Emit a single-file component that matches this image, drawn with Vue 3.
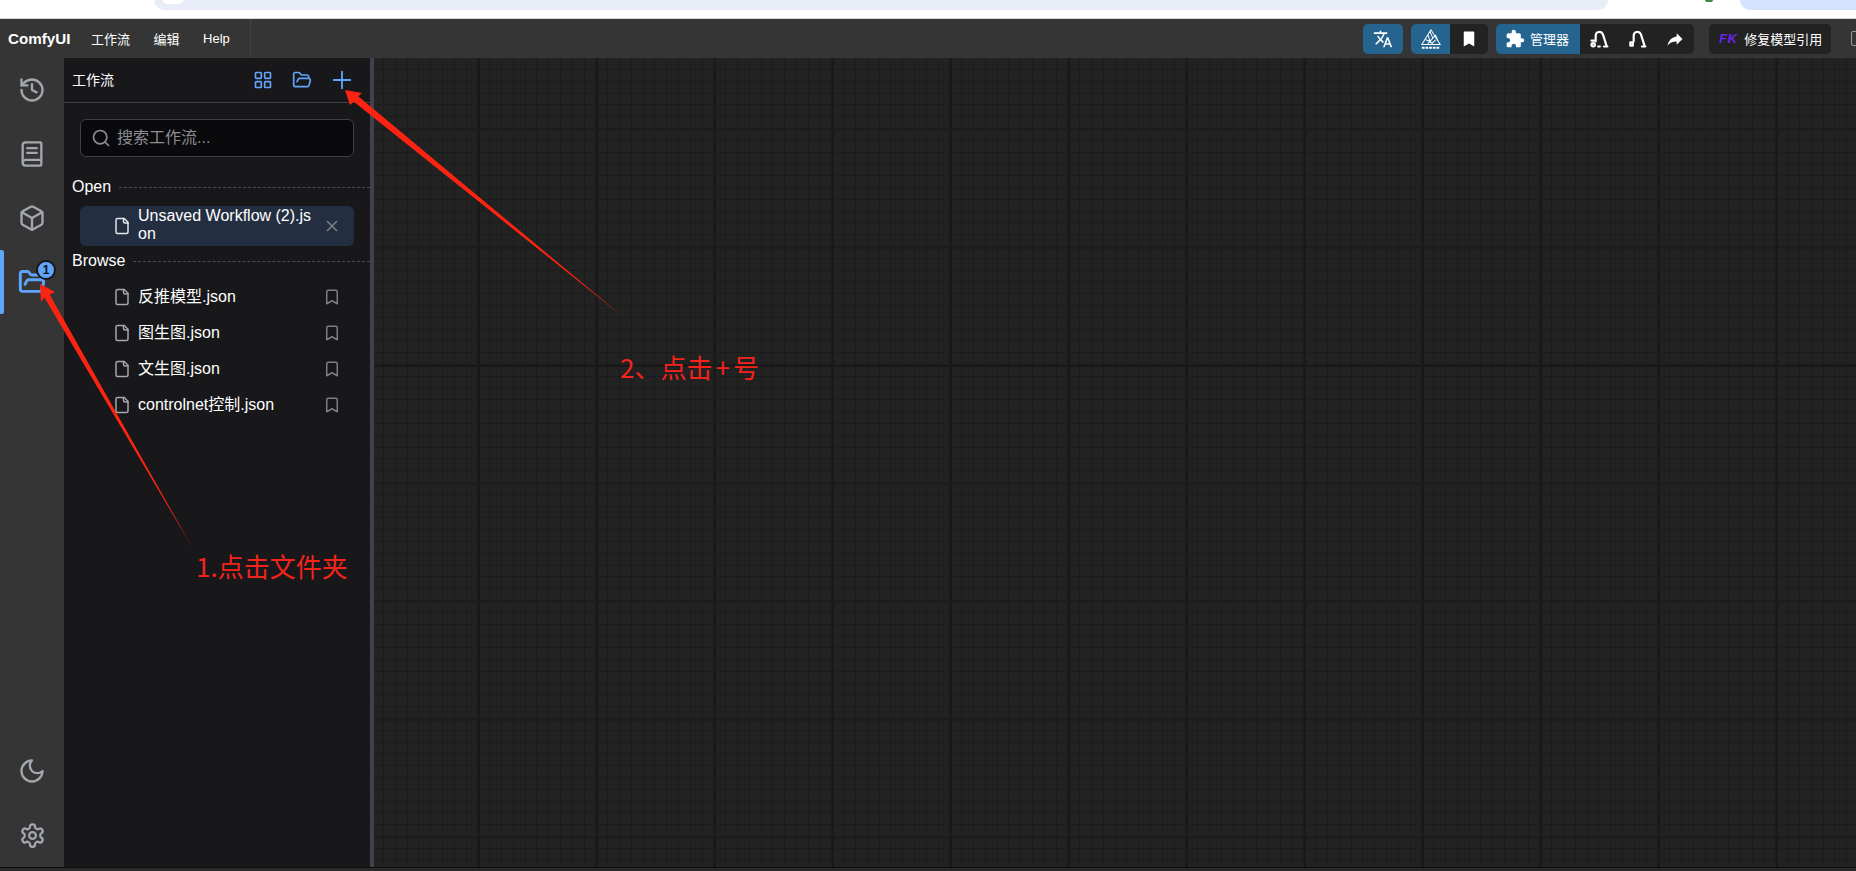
<template>
  <div class="page">
    <div class="chrome">
      <div class="tab-strip"><span class="tab-dot"></span></div>
      <div class="green-dot"></div>
      <div class="profile-pill"></div>
    </div>

    <header class="menubar">
      <div class="logo">ComfyUI</div>
      <nav class="menu">
        <span v-for="m in menus" :key="m">{{ m }}</span>
      </nav>

      <div class="tools">
        <div class="group">
          <button class="tool blue w40"><Icon name="translate" :size="20" /></button>
        </div>
        <div class="group">
          <button class="tool blue w39">
            <svg width="22" height="22" viewBox="0 0 24 24" fill="none" stroke="#fff" stroke-width="1.1">
              <path d="M12 2 2 18h20L12 2ZM11 4l3 7-6 7M14 11l3-3 3 7M5 12l6 3 4 3M9 8l2 7M17 13l-5 5" />
              <path d="M2 21.5h20" stroke-width="2" stroke-dasharray="3 1" />
            </svg>
          </button>
          <button class="tool w38"><Icon name="bookmarkFill" :size="18" /></button>
        </div>
        <div class="group">
          <button class="tool blue manager"><Icon name="puzzle" :size="20" /><span>管理器</span></button>
          <button class="tool w38"><Icon class="thick" name="vacuum" :size="20" /></button>
          <button class="tool w38"><Icon class="thick" name="vacuum2" :size="20" /></button>
          <button class="tool w38"><Icon name="share" :size="20" /></button>
        </div>
        <div class="group fix">
          <button class="tool fixbtn"><b class="fk">FK</b><span>修复模型引用</span></button>
        </div>
        <div class="cut-icon"></div>
      </div>
    </header>

    <div class="main">
      <aside class="sidebar">
        <div class="side-top">
          <div class="side-btn"><Icon name="history" :size="28" /></div>
          <div class="side-btn"><Icon name="book" :size="28" /></div>
          <div class="side-btn"><Icon name="box" :size="28" /></div>
          <div class="side-btn active">
            <Icon name="folder" :size="28" />
            <span class="badge">1</span>
          </div>
        </div>
        <div class="side-bottom">
          <div class="side-btn"><Icon name="moon" :size="28" /></div>
          <div class="side-btn"><Icon name="gear" :size="27" /></div>
        </div>
      </aside>

      <section class="panel">
        <div class="panel-head">
          <span class="panel-title">工作流</span>
          <div class="panel-actions">
            <Icon name="grid" :size="20" />
            <Icon name="folder" :size="20" />
            <Icon name="plus" :size="22" />
          </div>
        </div>

        <div class="search">
          <Icon name="search" :size="20" />
          <span class="search-text">搜索工作流...</span>
        </div>

        <div class="divider"><span>Open</span></div>
        <div class="row open-row">
          <Icon class="file" name="file" :size="18" />
          <span class="row-text">Unsaved Workflow (2).json</span>
          <Icon class="row-end" name="close" :size="18" />
        </div>

        <div class="divider browse"><span>Browse</span></div>
        <div class="row" v-for="f in files" :key="f">
          <Icon class="file dim" name="file" :size="18" />
          <span class="row-text">{{ f }}</span>
          <Icon class="row-end" name="bookmark" :size="18" />
        </div>
      </section>

      <div class="splitter"></div>
      <div class="canvas"></div>
    </div>
    <div class="bottom-line"></div>

    <svg class="arrows" width="1856" height="871" viewBox="0 0 1856 871">
      <polygon points="192,547 49.6,294.5 55,292 40,284 41,302 44.4,297.5" fill="#fb2412" />
      <polygon points="622,316 358.2,96.3 362,93 345,90 350,105 353.8,101.7" fill="#fb2412" />
    </svg>
    <div class="note note-1">1.点击文件夹</div>
    <div class="note note-2">2、点击<span class="plus-sign">+</span>号</div>
  </div>
</template>

<script setup>
import { h } from "vue"

const menus = ["工作流", "编辑", "Help"]
const files = ["反推模型.json", "图生图.json", "文生图.json", "controlnet控制.json"]

const strokes = {
  history: ["M3 12a9 9 0 1 0 9-9 9.75 9.75 0 0 0-6.74 2.74L3 8", "M3 3v5h5", "M12 7v5l4 2"],
  book: ["M4 19.5v-15A2.5 2.5 0 0 1 6.5 2H19a1 1 0 0 1 1 1v18a1 1 0 0 1-1 1H6.5a1 1 0 0 1 0-5H20", "M8 11h8", "M8 7h8"],
  box: [
    "M21 8a2 2 0 0 0-1-1.73l-7-4a2 2 0 0 0-2 0l-7 4A2 2 0 0 0 3 8v8a2 2 0 0 0 1 1.73l7 4a2 2 0 0 0 2 0l7-4A2 2 0 0 0 21 16Z",
    "m3.3 7 8.7 5 8.7-5",
    "M12 22V12"
  ],
  folder: [
    "m6 14 1.5-2.9A2 2 0 0 1 9.24 10H20a2 2 0 0 1 1.94 2.5l-1.54 6a2 2 0 0 1-1.95 1.5H4a2 2 0 0 1-2-2V5a2 2 0 0 1 2-2h3.9a2 2 0 0 1 1.69.9l.81 1.2a2 2 0 0 0 1.67.9H18a2 2 0 0 1 2 2v2"
  ],
  moon: ["M12 3a6 6 0 0 0 9 9 9 9 0 1 1-9-9Z"],
  gear: [
    "M12.22 2h-.44a2 2 0 0 0-2 2v.18a2 2 0 0 1-1 1.73l-.43.25a2 2 0 0 1-2 0l-.15-.08a2 2 0 0 0-2.73.73l-.22.38a2 2 0 0 0 .73 2.73l.15.1a2 2 0 0 1 1 1.72v.51a2 2 0 0 1-1 1.74l-.15.09a2 2 0 0 0-.73 2.73l.22.38a2 2 0 0 0 2.73.73l.15-.08a2 2 0 0 1 2 0l.43.25a2 2 0 0 1 1 1.73V20a2 2 0 0 0 2 2h.44a2 2 0 0 0 2-2v-.18a2 2 0 0 1 1-1.73l.43-.25a2 2 0 0 1 2 0l.15.08a2 2 0 0 0 2.73-.73l.22-.39a2 2 0 0 0-.73-2.73l-.15-.08a2 2 0 0 1-1-1.74v-.5a2 2 0 0 1 1-1.74l.15-.09a2 2 0 0 0 .73-2.73l-.22-.38a2 2 0 0 0-2.73-.73l-.15.08a2 2 0 0 1-2 0l-.43-.25a2 2 0 0 1-1-1.73V4a2 2 0 0 0-2-2z",
    "M15 12a3 3 0 1 1-6 0 3 3 0 0 1 6 0z"
  ],
  file: ["M15 2H6a2 2 0 0 0-2 2v16a2 2 0 0 0 2 2h12a2 2 0 0 0 2-2V7Z", "M14 2v4a2 2 0 0 0 2 2h4"],
  bookmark: ["m19 21-7-4-7 4V5a2 2 0 0 1 2-2h10a2 2 0 0 1 2 2v16z"],
  close: ["M18 6 6 18", "m6 6 12 12"],
  plus: ["M12 3v18", "M3 12h18"],
  search: ["M19 11a8 8 0 1 1-16 0 8 8 0 0 1 16 0z", "m21 21-4.3-4.3"],
  grid: [
    "M4 3h5a1 1 0 0 1 1 1v5a1 1 0 0 1-1 1H4a1 1 0 0 1-1-1V4a1 1 0 0 1 1-1z",
    "M15 3h5a1 1 0 0 1 1 1v5a1 1 0 0 1-1 1h-5a1 1 0 0 1-1-1V4a1 1 0 0 1 1-1z",
    "M15 14h5a1 1 0 0 1 1 1v5a1 1 0 0 1-1 1h-5a1 1 0 0 1-1-1v-5a1 1 0 0 1 1-1z",
    "M4 14h5a1 1 0 0 1 1 1v5a1 1 0 0 1-1 1H4a1 1 0 0 1-1-1v-5a1 1 0 0 1 1-1z"
  ],
  vacuum: ["M8 15V8a4.5 4.5 0 0 1 8.6-1.8L21 20", "M11 21h2", "M18 21h4", "M3 14h3", "M7 19a2 2 0 1 1-4 0 2 2 0 0 1 4 0z"],
  vacuum2: ["M8 15V8a4.5 4.5 0 0 1 8.6-1.8L21 20", "M18 21h4", "M4 16h3v4H4z"]
}

const fills = {
  translate:
    "M12.87 15.07l-2.54-2.51.03-.03c1.74-1.94 2.98-4.17 3.71-6.53H17V4h-7V2H8v2H1v1.99h11.17C11.5 7.92 10.44 9.75 9 11.35 8.07 10.32 7.3 9.19 6.69 8h-2c.73 1.63 1.73 3.17 2.98 4.56l-5.09 5.02L4 19l5-5 3.11 3.11.76-2.04zM18.5 10h-2L12 22h2l1.12-3h4.75L21 22h2l-4.5-12zm-2.62 7l1.62-4.33L19.12 17h-3.24z",
  puzzle:
    "M20.5 11H19V7c0-1.1-.9-2-2-2h-4V3.5C13 2.12 11.88 1 10.5 1S8 2.12 8 3.5V5H4c-1.1 0-1.99.9-1.99 2v3.8H3.5c1.49 0 2.7 1.21 2.7 2.7s-1.21 2.7-2.7 2.7H2V20c0 1.1.9 2 2 2h3.8v-1.5c0-1.49 1.21-2.7 2.7-2.7 1.49 0 2.7 1.21 2.7 2.7V22H17c1.1 0 2-.9 2-2v-4h1.5c1.38 0 2.5-1.12 2.5-2.5S21.88 11 20.5 11z",
  share: "M14 9V5l7 7-7 7v-4.1c-5 0-8.5 1.6-11 5.1 1-5 4-10 11-11z",
  bookmarkFill: "M6 2h12a1 1 0 0 1 1 1v19l-7-4-7 4V3a1 1 0 0 1 1-1z"
}

const Icon = (props) => {
  if (fills[props.name]) {
    return h("svg", { width: props.size, height: props.size, viewBox: "0 0 24 24", fill: "currentColor" }, [
      h("path", { d: fills[props.name] })
    ])
  }
  return h(
    "svg",
    {
      width: props.size,
      height: props.size,
      viewBox: "0 0 24 24",
      fill: "none",
      stroke: "currentColor",
      "stroke-width": 2,
      "stroke-linecap": "round",
      "stroke-linejoin": "round"
    },
    strokes[props.name].map((d) => h("path", { d }))
  )
}
Icon.props = ["name", "size"]
</script>

<style scoped>
.page {
  position: relative;
  width: 1856px;
  height: 871px;
  overflow: hidden;
  display: flex;
  flex-direction: column;
  background: #fff;
  font-family: "Liberation Sans", "Noto Sans CJK SC", sans-serif;
  color: #fff;
}

/* browser bits above the app */
.chrome {
  position: relative;
  height: 18px;
  flex: none;
  display: flex;
  border-bottom: 1px solid #dcdcdc;
}

.tab-strip {
  margin-left: 154px;
  width: 1454px;
  height: 10px;
  background: #e9edf8;
  border-radius: 0 0 15px 15px;
}

.tab-dot {
  display: block;
  margin-left: 9px;
  width: 20px;
  height: 4px;
  background: #fff;
  border-radius: 0 0 10px 10px;
}

.green-dot {
  margin-left: 97px;
  width: 8px;
  height: 2px;
  background: #3d8b40;
  border-radius: 0 0 4px 4px;
}

.profile-pill {
  margin-left: 27px;
  flex: 1;
  height: 10px;
  background: #d3e3fd;
  border-radius: 0 0 0 15px;
}

.menubar {
  height: 39px;
  flex: none;
  display: flex;
  align-items: center;
  background: #353535;
}

.logo {
  margin-left: 8px;
  width: 63px;
  font-size: 15.2px;
  font-weight: 700;
  white-space: nowrap;
}

.menu {
  display: flex;
  align-items: center;
  gap: 23.5px;
  height: 100%;
  padding: 0 20px 0 20px;
  font-size: 13px;
  border-right: 1px solid #444;
}

.tools {
  margin-left: auto;
  display: flex;
  align-items: center;
  gap: 8px;
  margin-right: -7px;
}

.group {
  display: flex;
  flex: none;
  height: 30px;
  border-radius: 5px;
  overflow: hidden;
  background: #222;
}

.group.fix {
  margin-left: 7px;
}

.tool {
  border: none;
  padding: 0;
  height: 30px;
  display: flex;
  align-items: center;
  justify-content: center;
  background: transparent;
  color: #fff;
  font: inherit;
  font-size: 13px;
}

.tool.blue {
  background: #24648f;
}

.w40 { width: 40px; }
.w39 { width: 39px; }
.w38 { width: 38px; }

.thick {
  stroke-width: 2.6;
}

.manager {
  width: 84px;
  gap: 5px;
  justify-content: flex-start;
  padding-left: 9px;
}

.fixbtn {
  width: 122px;
  gap: 7px;
  justify-content: flex-start;
  padding-left: 10px;
}

.fk {
  color: #6a22f0;
  font-style: italic;
  font-size: 13px;
  font-weight: 900;
  letter-spacing: 0.5px;
}

.cut-icon {
  flex: none;
  margin-left: 12px;
  width: 10px;
  height: 13px;
  border: 1px solid #999;
  border-radius: 2px;
}

.main {
  flex: 1;
  display: flex;
  min-height: 0;
}

.bottom-line {
  height: 4px;
  flex: none;
  background: #2a2a2a;
  border-top: 1px solid #0c0c0c;
  box-sizing: border-box;
}

.sidebar {
  width: 64px;
  flex: none;
  background: #353535;
  display: flex;
  flex-direction: column;
  justify-content: space-between;
  color: #a3a7ae;
}

.side-btn {
  position: relative;
  height: 64px;
  display: flex;
  align-items: center;
  justify-content: center;
}

.side-btn.active {
  color: #60a5fa;
}

.side-btn.active svg {
  stroke-width: 2.5;
}

.side-btn.active::before {
  content: "";
  position: absolute;
  left: 0;
  top: 0;
  width: 4px;
  height: 64px;
  background: #60a5fa;
  border-radius: 0 2px 2px 0;
}

.badge {
  position: absolute;
  left: 36px;
  top: 10px;
  width: 16px;
  height: 16px;
  border: 2px solid #18181b;
  border-radius: 50%;
  background: #60a5fa;
  color: #111;
  font-size: 12px;
  font-weight: 700;
  line-height: 16px;
  text-align: center;
}

.panel {
  width: 306px;
  flex: none;
  background: #18181b;
  font-size: 16px;
}

.panel-head {
  height: 44px;
  display: flex;
  align-items: center;
  justify-content: space-between;
  padding: 0 17px 0 8px;
  border-bottom: 1px solid #3f3f46;
}

.panel-title {
  font-size: 14px;
  padding-bottom: 2px;
}

.panel-actions {
  display: flex;
  align-items: center;
  gap: 19px;
  color: #60a5fa;
}

.search {
  margin: 16px 16px 0;
  height: 36px;
  display: flex;
  align-items: center;
  gap: 6px;
  padding-left: 10px;
  background: #0a0a0c;
  border: 1px solid #3f3f46;
  border-radius: 6px;
  color: #8a8d92;
}

.search-text {
  padding-bottom: 4px;
}

.divider {
  display: flex;
  align-items: center;
  margin-top: 20px;
  padding-left: 8px;
  height: 20px;
  line-height: 20px;
}

.divider::after {
  content: "";
  flex: 1;
  margin-left: 8px;
  border-top: 1px dashed #4b4b52;
}

.divider.browse {
  margin-top: 5px;
}

.row {
  height: 36px;
  display: flex;
  align-items: center;
  margin: 0 16px;
  padding-left: 33px;
  padding-right: 13px;
  line-height: 18px;
}

.divider + .row {
  margin-top: 9px;
}

.divider.browse + .row {
  margin-top: 8px;
}

.open-row {
  height: 40px;
  background: #232f41;
  border-radius: 6px;
}

.open-row .row-text {
  padding-bottom: 2px;
}

.file {
  flex: none;
  margin-right: 7px;
  color: #e5e7eb;
}

.file.dim {
  color: #a3a7ae;
}

.row-text {
  flex: 1;
  min-width: 0;
  word-break: break-all;
}

.row-end {
  flex: none;
  margin-left: 10px;
  color: #7c7f85;
}

.splitter {
  width: 4px;
  flex: none;
  background: #40414a;
}

.canvas {
  flex: 1;
  background-color: #222;
  background-image:
    linear-gradient(#191919 2px, transparent 2px),
    linear-gradient(90deg, #191919 2px, transparent 2px),
    linear-gradient(#1d1d1d 2px, transparent 2px),
    repeating-linear-gradient(90deg, #1c1c1c 0 1px, transparent 1px 11.8px),
    repeating-linear-gradient(#1c1c1c 0 1px, transparent 1px 11.8px);
  background-size: 100% 944px, 118px 118px, 118px 118px, 118px 118px, 118px 118px;
  background-position: 0 307px, 104px 0, 0 71px, 9px 0, 0 11px;
}

.arrows {
  position: absolute;
  left: 0;
  top: 0;
  pointer-events: none;
}

.note {
  position: absolute;
  font-family: "Noto Sans CJK SC", sans-serif;
  font-size: 26px;
  line-height: 30px;
  color: #f5231b;
  white-space: nowrap;
}

.note-1 {
  left: 196px;
  top: 551px;
}

.note-2 {
  left: 620px;
  top: 352px;
}

.plus-sign {
  padding: 0 3px;
}
</style>
